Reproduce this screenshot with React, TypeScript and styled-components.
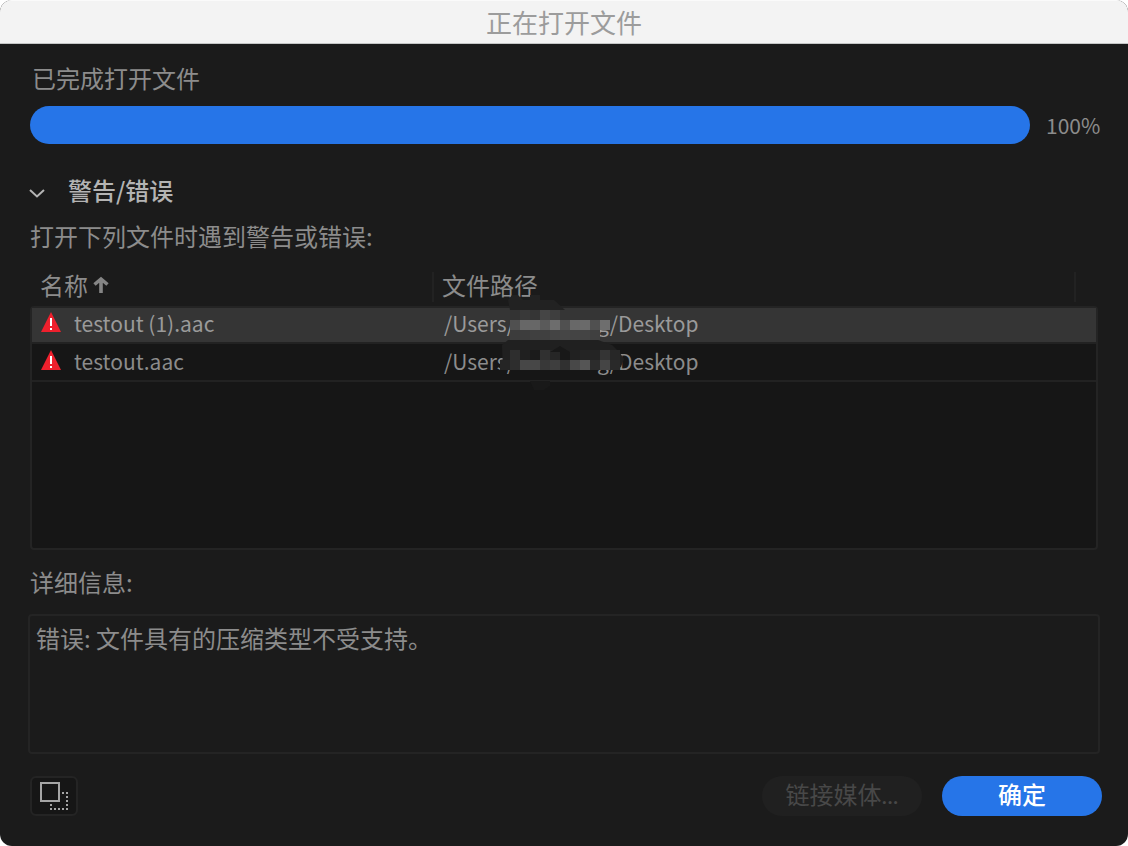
import React from 'react';
import styled, { createGlobalStyle } from 'styled-components';

const GlobalStyle = createGlobalStyle`
  *, *::before, *::after { box-sizing: border-box; }
  body {
    margin: 0;
    background: #fff;
    font-family: "Noto Sans CJK SC", "Noto Sans", sans-serif;
  }
`;

const Dialog = styled.main`
  display: flex;
  flex-direction: column;
  min-height: 100vh;
  border-radius: 12px;
  overflow: hidden;
  background: #1b1b1b;
  color: #8c8c8c;
  font-size: 24px;
  line-height: 36px;
`;

const TitleBar = styled.header`
  height: 44px;
  border-bottom: 1px solid #c4c6c6;
  background: #f3f3f3;
  box-shadow: inset 0 1px #fafafa;
`;

const Title = styled.h1`
  margin: 0;
  color: #9c9c9c;
  font-size: 26px;
  font-weight: 400;
  line-height: 44px;
  text-align: center;
`;

const Content = styled.div`
  flex: 1;
  display: flex;
  flex-direction: column;
  padding: 16px 26px 30px 28px;
`;

const ProgressLabel = styled.label`
  padding-left: 4px;
`;

const ProgressRow = styled.div`
  display: flex;
  align-items: center;
  gap: 16px;
  margin-top: 10px;
  padding-left: 2px;
  font-size: 21px;
`;

const Progress = styled.progress`
  flex: 1;
  min-width: 0;
  height: 38px;
  border: 0;
  border-radius: 19px;
  overflow: hidden;
  appearance: none;
  background: #111;

  &::-webkit-progress-bar { background: #111; }
  &::-webkit-progress-value { background: #2675e8; }
`;

const Percent = styled.output`
  width: 56px;
`;

const Disclosure = styled.button`
  display: flex;
  align-items: center;
  align-self: flex-start;
  gap: 22px;
  margin: 28px 0 10px;
  padding: 0;
  border: 0;
  background: none;
  color: #b4b4b4;
  font: inherit;
  font-weight: 500;
`;

const Description = styled.p`
  margin: 0;
  padding-left: 2px;
`;

const FileTable = styled.table`
  position: relative;
  display: flex;
  flex-direction: column;
  flex: 1;
  margin: 14px 4px 0 2px;
  text-align: left;
`;

const HeadGroup = styled.thead`
  display: block;
`;

const HeadRow = styled.tr`
  display: grid;
  grid-template-columns: 404px 1fr 22px;
  height: 38px;
  padding-top: 4px;
`;

const HeadCell = styled.th`
  display: flex;
  align-items: center;
  gap: 4px;
  height: 30px;
  padding: 0 8px 4px 10px;
  border-right: 2px solid #222;
  font-weight: 400;

  & + & { padding-left: 8px; }
`;

const Body = styled.tbody`
  display: block;
  flex: 1;
  border: 2px solid #242424;
  border-radius: 4px;
  background: #161616;
`;

const Cell = styled.td`
  display: flex;
  align-items: center;
  padding: 0 10px;
  line-height: 30px;
`;

const FileCell = styled(Cell)`
  gap: 12px;
  padding: 0 8px;
`;

const Row = styled.tr<{ $selected?: boolean }>`
  display: grid;
  grid-template-columns: 402px 1fr;
  height: ${p => (p.$selected ? 36 : 38)}px;
  padding-bottom: ${p => (p.$selected ? 4 : 2)}px;
  border-bottom: 2px solid #222;
  background: ${p => (p.$selected ? '#353535' : '#161616')};
  color: ${p => (p.$selected ? '#9a9a9a' : '#8c8c8c')};
  font-size: 21px;
`;

const Redacted = styled.span`
  width: 82px;
`;

const Mosaic = styled.svg`
  position: absolute;
  left: 470px;
  top: 27px;
`;

const DetailsLabel = styled.label`
  margin: 14px 0;
  padding-left: 2px;
`;

const Details = styled.textarea`
  display: block;
  height: 140px;
  margin-right: 2px;
  padding: 4px 6px;
  border: 2px solid #242424;
  border-radius: 4px;
  outline: 0;
  resize: none;
  background: #1b1b1b;
  color: inherit;
  font: inherit;
`;

const Footer = styled.footer`
  display: flex;
  align-items: center;
  gap: 20px;
  margin-top: 22px;
`;

const IconButton = styled.button`
  display: flex;
  width: 48px;
  height: 40px;
  margin: 0 auto 0 2px;
  padding: 4px 6px;
  border: 2px solid #242424;
  border-radius: 6px;
  background: #161616;
`;

const Button = styled.button<{ $primary?: boolean }>`
  width: 160px;
  height: 40px;
  padding: 0 0 3px;
  border: 0;
  border-radius: 20px;
  background: ${p => (p.$primary ? '#2675e8' : '#202020')};
  color: ${p => (p.$primary ? '#fff' : '#484848')};
  font: inherit;
  font-family: Lato, "Noto Sans CJK SC", sans-serif;
  font-weight: ${p => (p.$primary ? 500 : 400)};
`;

const WarningIcon = () => (
  <svg width="22" height="22" viewBox="0 0 22 22" aria-label="错误" role="img">
    <path d="M11 0 21 20H1Z" fill="#ee202d" />
    <path d="M10 6h2v8h-2zM10 16h2v2h-2z" fill="#fff" />
  </svg>
);

const SortArrow = () => (
  <svg width="18" height="20" viewBox="0 0 18 20" aria-hidden="true">
    <path d="M9 18V4M2.500 9.500 9 4 15.500 9.500" fill="none" stroke="#858585" strokeWidth="3.600" />
  </svg>
);

const tiles: [number, number, string[]][] = [
  [10, 15, ['#333', '#393939', '#353535', '#454545', '#3e3e3e']],
  [10, 25, ['#505050', '#676767', '#676767', '#5a5a5a', '#6d6d6d', '#505050', '#686868', '#6a6a6a', '#505050', '#6e6e6e']],
  [10, 35, ['#3c3c3c', '#3d3d3d', '#404040', '#404040', '#444', '#464646', '#444', '#444', '#404040']],
  [10, 55, ['#2e2e2e', '#202020', '#1b1b1b', '#303030', '#262626', '#1f1f1f', '#212121', '#242424', '#242424', '#343434', '#272727']],
  [0, 65, ['#252525', '#2d2d2d', '#474747', '#474747', '#383838', '#3e3e3e', '#303030', '#484848', '#555', '#2c2c2c', '#454545', '#292929']],
];

const PathMosaic = () => (
  <Mosaic width="126" height="100" viewBox="0 0 126 100" aria-hidden="true">
    <path d="M8 5 12 0 18 0 23 5H30V0H40V5H54L65 15H10Z" fill="#222" />
    <path d="M2 50 8 45H98L112 50 120 58 124 64 121 72 116 75H3Z" fill="#202020" />
    {tiles.map(([x, y, colors]) =>
      colors.map((color, i) => (
        <rect key={`${y}-${i}`} x={x + i * 10} y={y} width="10" height="10" fill={color} />
      )),
    )}
    <path d="M50 57 60 51 70 57V65H60V57Z" fill="#181818" />
    <path d="M30 86H50V91L44 95H34Z" fill="#191919" />
  </Mosaic>
);

const files = ['testout (1).aac', 'testout.aac'];

export default function App() {
  return (
    <>
      <GlobalStyle />
      <Dialog>
        <TitleBar>
          <Title>正在打开文件</Title>
        </TitleBar>
        <Content>
          <ProgressLabel htmlFor="progress">已完成打开文件</ProgressLabel>
          <ProgressRow>
            <Progress id="progress" value={100} max={100} />
            <Percent htmlFor="progress">100%</Percent>
          </ProgressRow>
          <Disclosure type="button" aria-expanded="true">
            <svg width="18" height="18" viewBox="0 0 18 18" aria-hidden="true">
              <path d="M2 9 9 15.500 16 9" fill="none" stroke="#b4b4b4" strokeWidth="2" />
            </svg>
            警告/错误
          </Disclosure>
          <Description>打开下列文件时遇到警告或错误:</Description>
          <FileTable>
            <HeadGroup>
              <HeadRow>
                <HeadCell scope="col" aria-sort="ascending">名称<SortArrow /></HeadCell>
                <HeadCell scope="col">文件路径</HeadCell>
              </HeadRow>
            </HeadGroup>
            <Body>
              {files.map((name, i) => (
                <Row key={name} $selected={i === 0}>
                  <FileCell><WarningIcon />{name}</FileCell>
                  <Cell>
                    /Users/
                    <Redacted />
                    g/Desktop
                    {i === 1 && <PathMosaic />}
                  </Cell>
                </Row>
              ))}
            </Body>
          </FileTable>
          <DetailsLabel htmlFor="details">详细信息:</DetailsLabel>
          <Details id="details" readOnly defaultValue="错误: 文件具有的压缩类型不受支持。" />
          <Footer>
            <IconButton type="button" aria-label="复制">
              <svg width="32" height="28" viewBox="0 0 32 28" aria-hidden="true">
                <path d="M3 1H21V19H3Z" fill="none" stroke="#a5a5a5" strokeWidth="2" />
                <path
                  d="M24 10h2v2h-2zM28 10h2v2h-2zM28 14h2v2h-2zM28 18h2v2h-2zM28 22h2v2h-2zM28 26h2v2h-2zM24 26h2v2h-2zM20 26h2v2h-2zM16 26h2v2h-2zM12 26h2v2h-2zM12 22h2v2h-2z"
                  fill="#a5a5a5"
                />
              </svg>
            </IconButton>
            <Button type="button" disabled>链接媒体...</Button>
            <Button type="button" $primary>确定</Button>
          </Footer>
        </Content>
      </Dialog>
    </>
  );
}
